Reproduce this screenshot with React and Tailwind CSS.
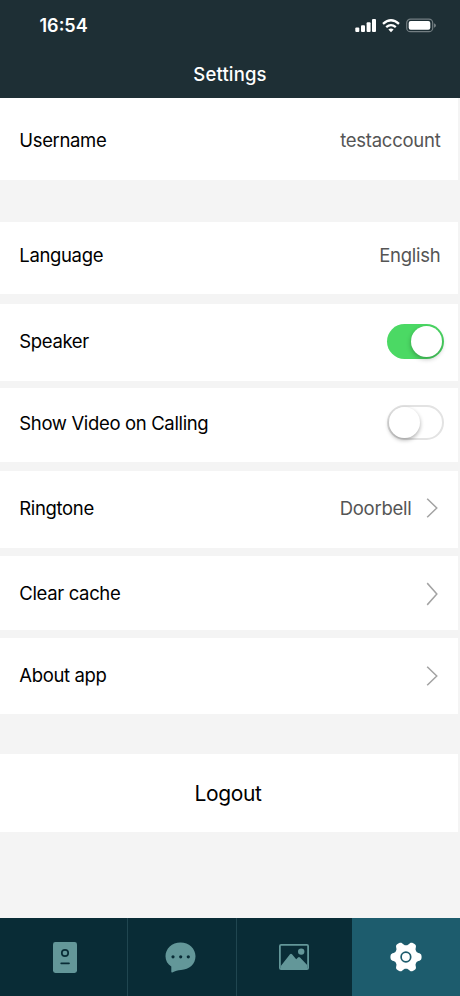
import { useState } from 'react';

function StatusIcons() {
  return (
    <svg width="82" height="16" viewBox="0 0 82 16" fill="none">
      <g fill="#fff">
        <rect x="0.3" y="9.5" width="4" height="4.5" rx="1" />
        <rect x="6" y="7.3" width="4" height="6.7" rx="1" />
        <rect x="11.6" y="4.3" width="4" height="9.7" rx="1" />
        <rect x="17" y="1" width="4" height="13" rx="1" />
        <path d="M36 14.2 L33.4 11.6 Q36 9.4 38.6 11.6 Z" />
      </g>
      <path d="M31.2 9.2 Q36 5 40.8 9.2" stroke="#fff" strokeWidth="2.3" />
      <path d="M28 5.8 Q36 -1.2 44 5.8" stroke="#fff" strokeWidth="2.3" />
      <rect x="51.7" y="1.1" width="26" height="12.6" rx="3.8" stroke="#737e82" strokeWidth="1.2" />
      <rect x="53.7" y="3" width="21.6" height="8.8" rx="2" fill="#fff" />
      <path d="M79 5.3 Q81 6 81 7.5 Q81 9 79 9.7 Z" fill="#737e82" />
    </svg>
  );
}

function Chevron({ tall }) {
  return (
    <svg width="12" height={tall ? 26 : 22} viewBox="0 0 12 24" preserveAspectRatio="none" fill="none">
      <path d="M1.2 2 L10.8 12 L1.2 22" stroke="#a3a3a3" strokeWidth="1.5" />
    </svg>
  );
}

function Toggle({ on, onClick }) {
  return (
    <button
      onClick={onClick}
      role="switch"
      aria-checked={on}
      className={`-mr-[3.5px] flex h-[35px] w-[57px] items-center rounded-full ${
        on ? 'justify-end bg-[#4bd964] pr-[2px]' : 'justify-start border-2 border-[#e3e3e3] bg-white'
      }`}
    >
      <span
        className={`size-[31px] rounded-full bg-white ${
          on ? 'shadow-[0_2px_5px_rgba(0,0,0,0.28)]' : 'shadow-[0_2px_4px_rgba(0,0,0,0.32)]'
        }`}
      />
    </button>
  );
}

function Row({ label, className, children }) {
  return (
    <div className={`mr-[2px] flex items-center justify-between bg-white pr-[17.5px] pl-[19.3px] ${className}`}>
      <span className="text-black">{label}</span>
      {children}
    </div>
  );
}

function DoorIcon() {
  return (
    <svg width="24" height="31" viewBox="0 0 24 31" fill="none">
      <rect width="24" height="31" rx="2.4" fill="#639799" />
      <circle cx="12" cy="11" r="3.2" stroke="#092c36" strokeWidth="1.7" />
      <path d="M8.2 21.3 H16" stroke="#092c36" strokeWidth="1.7" strokeLinecap="round" />
    </svg>
  );
}

function ChatIcon() {
  return (
    <svg width="31" height="31" viewBox="0 0 31 31">
      <path d="M15.5 0.5 C24 0.5 30.5 6.6 30.5 14.3 C30.5 22 24.3 27.9 16 27.9 C12.8 28 10.3 28.6 7.3 30.5 C6.7 30.8 6.3 30.5 6.3 29.8 V24.6 C2.6 22.3 0.5 18.6 0.5 14.3 C0.5 6.6 7 0.5 15.5 0.5 Z" fill="#639799" />
      <g fill="#092c36">
        <circle cx="8" cy="14.8" r="1.6" />
        <circle cx="15.7" cy="14.8" r="1.6" />
        <circle cx="23.3" cy="14.8" r="1.6" />
      </g>
    </svg>
  );
}

function PictureIcon() {
  return (
    <svg width="30" height="26" viewBox="0 0 30 26" fill="none">
      <rect x="0.9" y="0.9" width="28.2" height="24.2" rx="1.2" stroke="#639799" strokeWidth="1.8" />
      <circle cx="22.2" cy="7.6" r="3.2" fill="#639799" />
      <path d="M1.8 22 L11 10.2 Q12 9.1 13 10.2 L17.2 15.3 L19 13.5 Q20 12.7 21 13.6 L28.2 21 V25 H1.8 Z" fill="#639799" />
    </svg>
  );
}

// six blunt teeth around the centre of a 32x30 box
const gearPoints = Array.from({ length: 120 }, (_, i) => {
  const angle = (i * Math.PI) / 60;
  const radius = 13.6 + 2.1 * Math.tanh(1.6 * Math.cos(6 * angle) + 0.2);
  return `${(16 + radius * Math.cos(angle)).toFixed(2)},${(15 + radius * Math.sin(angle)).toFixed(2)}`;
}).join(' ');

function GearIcon() {
  return (
    <svg width="32" height="30" viewBox="0 0 32 30">
      <polygon points={gearPoints} fill="#fff" />
      <circle cx="15.9" cy="15" r="4.8" fill="#fff" stroke="#1d5c6d" strokeWidth="1.7" />
    </svg>
  );
}

function App() {
  const [speaker, setSpeaker] = useState(true);
  const [showVideo, setShowVideo] = useState(false);

  return (
    <div className="flex h-[996px] w-[460px] flex-col overflow-hidden bg-[#f4f4f4] font-['Inter',sans-serif] text-[18.5px] leading-6 tracking-[-0.35px] text-[#555]">
      <header className="h-[98px] shrink-0 bg-[#1e2f35] text-white">
        <div className="flex h-[50px] items-center justify-between pr-[23px] pl-[39.5px] tracking-normal">
          <span className="pt-[2px] text-[18px] font-semibold">16:54</span>
          <span className="pt-[2px]"><StatusIcons /></span>
        </div>
        <h1 className="text-center text-[18.5px] leading-[48px] font-medium tracking-[0.15px]">Settings</h1>
      </header>

      <main className="flex-1">
        <Row label="Username" className="h-[82px] pt-[2px]">
          <span className="tracking-[-0.25px]">testaccount</span>
        </Row>
        <Row label="Language" className="mt-[42px] h-[72px] pb-[6px]">
          <span className="tracking-[-0.25px]">English</span>
        </Row>
        <Row label="Speaker" className="mt-[10px] h-[77px] pb-[3px]">
          <Toggle on={speaker} onClick={() => setSpeaker(!speaker)} />
        </Row>
        <Row label="Show Video on Calling" className="mt-[7px] h-[74px] pb-[5px]">
          <Toggle on={showVideo} onClick={() => setShowVideo(!showVideo)} />
        </Row>
        <Row label="Ringtone" className="mt-[9px] h-[77px] pb-[3px]">
          <span className="flex items-center gap-[14px] tracking-[-0.25px]">
            Doorbell
            <span className="mr-[3px]"><Chevron /></span>
          </span>
        </Row>
        <Row label="Clear cache" className="mt-[8px] h-[74px]">
          <span className="mr-[3px] pt-[2px]"><Chevron tall /></span>
        </Row>
        <Row label="About app" className="mt-[8px] h-[76px] pb-[2px]">
          <span className="mr-[3px] pt-[2px]"><Chevron /></span>
        </Row>
        <button className="mt-[40px] flex h-[78px] w-[458px] items-center justify-center bg-white pt-[2px] pr-[2px] text-[21px] text-black">
          Logout
        </button>
      </main>

      <nav className="flex h-[78px] shrink-0 bg-[#092c36]">
        <div className="flex w-[128px] items-center justify-center border-r border-[#204650] pl-[2px]"><DoorIcon /></div>
        <div className="flex w-[109px] items-center justify-center border-r border-[#204650] pr-[3px]"><ChatIcon /></div>
        <div className="flex w-[115px] items-center justify-center pr-[2px]"><PictureIcon /></div>
        <div className="flex w-[108px] items-center justify-center bg-[#1d5c6d] pr-px"><GearIcon /></div>
      </nav>
    </div>
  );
}

export default App;
